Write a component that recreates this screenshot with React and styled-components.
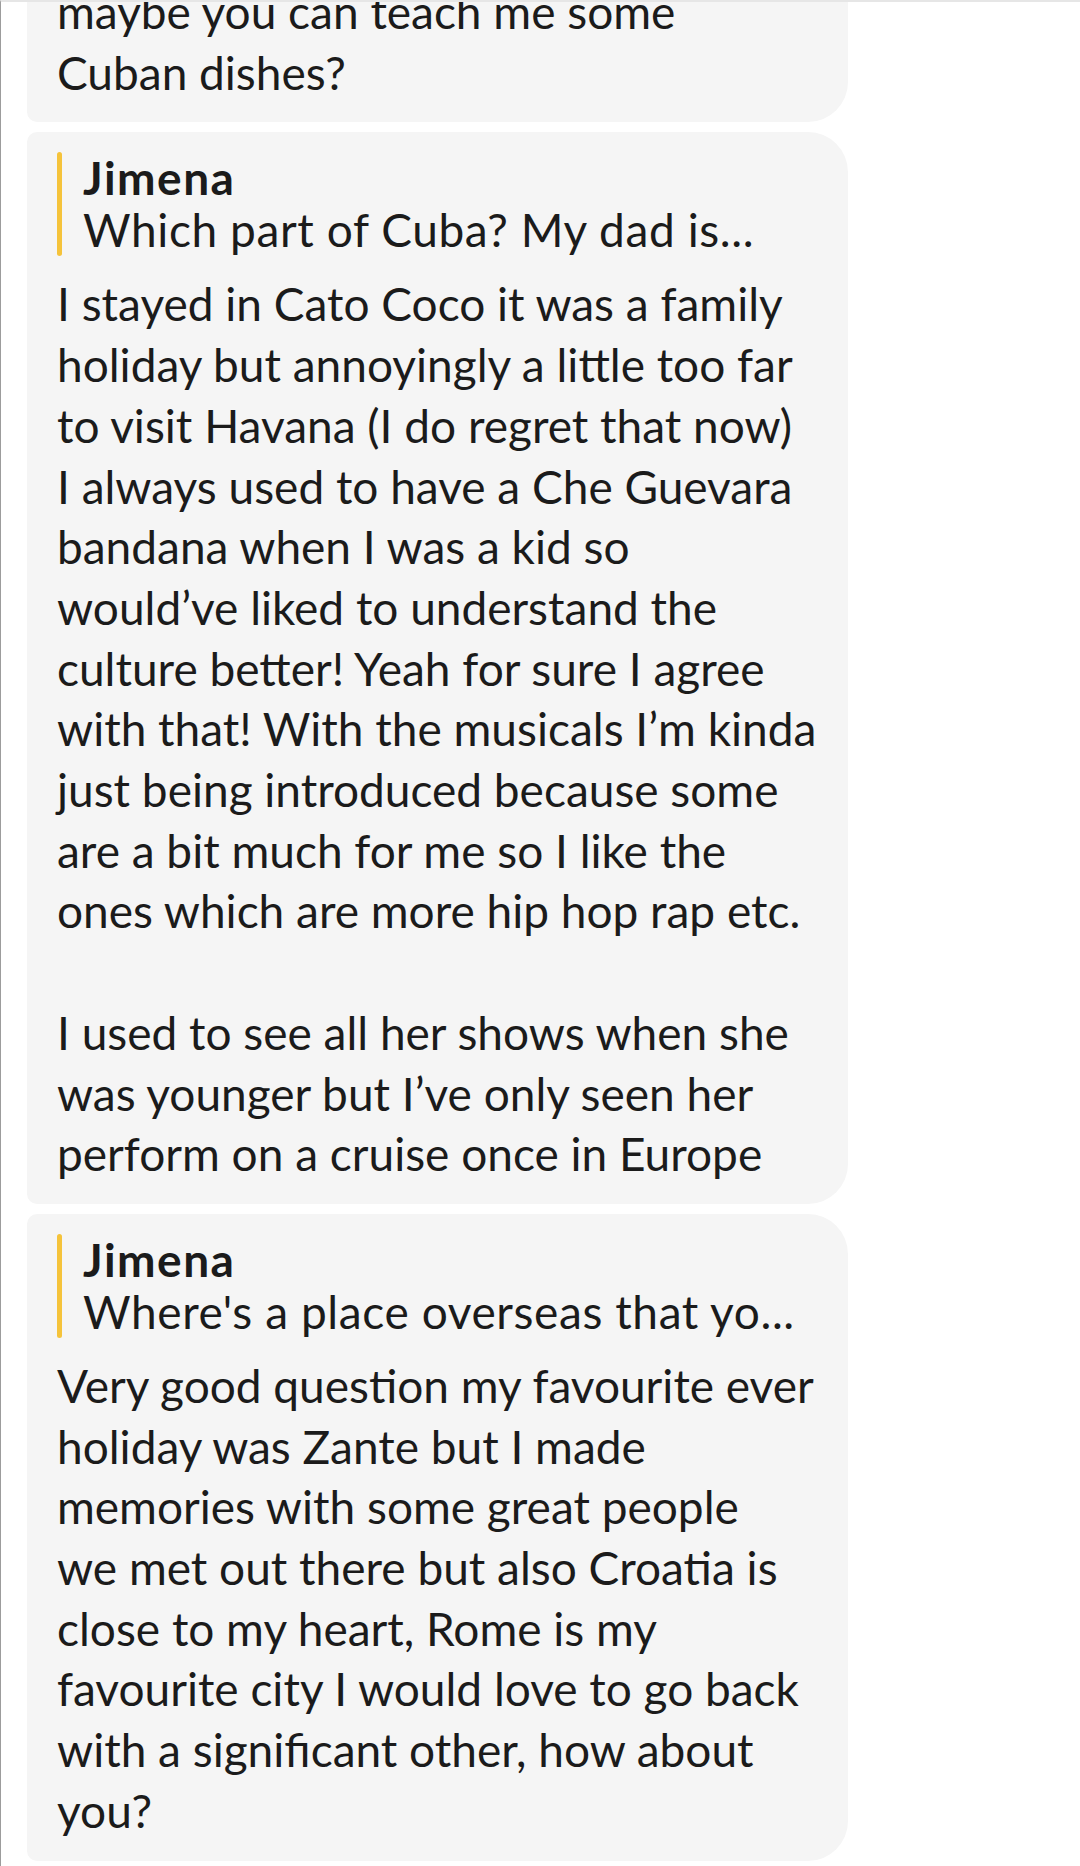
import React from 'react'
import styled, { createGlobalStyle } from 'styled-components'

const GlobalStyle = createGlobalStyle`
    body {
        margin: 0;
        background: #ffffff;
        font-family: Lato, "Noto Sans", sans-serif;
    }
`

const messages = [
    {
        id: 1,
        text: 'maybe you can teach me some\nCuban dishes?',
    },
    {
        id: 2,
        reply: { name: 'Jimena', text: 'Which part of Cuba? My dad is...' },
        text:
            'I stayed in Cato Coco it was a family\n' +
            'holiday but annoyingly a little too far\n' +
            'to visit Havana (I do regret that now)\n' +
            'I always used to have a Che Guevara\n' +
            'bandana when I was a kid so\n' +
            'would’ve liked to understand the\n' +
            'culture better! Yeah for sure I agree\n' +
            'with that! With the musicals I’m kinda\n' +
            'just being introduced because some\n' +
            'are a bit much for me so I like the\n' +
            'ones which are more hip hop rap etc.\n' +
            '\n' +
            'I used to see all her shows when she\n' +
            'was younger but I’ve only seen her\n' +
            'perform on a cruise once in Europe',
    },
    {
        id: 3,
        reply: { name: 'Jimena', text: "Where's a place overseas that yo..." },
        text:
            'Very good question my favourite ever\n' +
            'holiday was Zante but I made\n' +
            'memories with some great people\n' +
            'we met out there but also Croatia is\n' +
            'close to my heart, Rome is my\n' +
            'favourite city I would love to go back\n' +
            'with a significant other, how about\n' +
            'you?',
    },
]

function App() {
    return (
        <>
            <GlobalStyle />
            <Screen>
                <Thread>
                    { messages.map(m => (
                        <Bubble key={ m.id }>
                            { m.reply &&
                                <Reply>
                                    <ReplyName>{ m.reply.name }</ReplyName>
                                    <ReplyText>{ m.reply.text }</ReplyText>
                                </Reply>
                            }
                            <Body>{ m.text }</Body>
                        </Bubble>
                    )) }
                </Thread>
            </Screen>
        </>
    )
}

export default App

const Screen = styled.div`
    width: 1080px;
    height: 1866px;
    box-sizing: border-box;
    overflow: hidden;
    background: #ffffff;
    border-top: 2px solid #e6e6e6;
    border-left: 1px solid #9c9c9c;
`

// the list is scrolled, so the first bubble starts above the screen
const Thread = styled.div`
    display: flex;
    flex-direction: column;
    gap: 10px;
    margin-top: -40px;
    padding-left: 26px;
`

const Bubble = styled.div`
    width: 821px;
    box-sizing: border-box;
    padding: 20px 30px 19px 30px;
    background: #f5f5f5;
    border-radius: 10px 40px 40px 10px;
    color: #1b1b1b;
`

const Reply = styled.div`
    position: relative;
    padding-left: 26px;
    margin-bottom: 18px;

    &::before {
        content: '';
        position: absolute;
        left: 0;
        top: 0;
        bottom: 0;
        width: 5px;
        border-radius: 3px;
        background: #f5c33b;
    }
`

const ReplyName = styled.div`
    font-size: 46px;
    font-weight: 700;
    line-height: 52px;
    letter-spacing: 1.5px;
`

const ReplyText = styled.div`
    font-size: 46px;
    line-height: 52px;
    letter-spacing: 0.6px;
    white-space: nowrap;
`

const Body = styled.div`
    font-size: 46px;
    line-height: 60.7px;
    white-space: pre;
`
